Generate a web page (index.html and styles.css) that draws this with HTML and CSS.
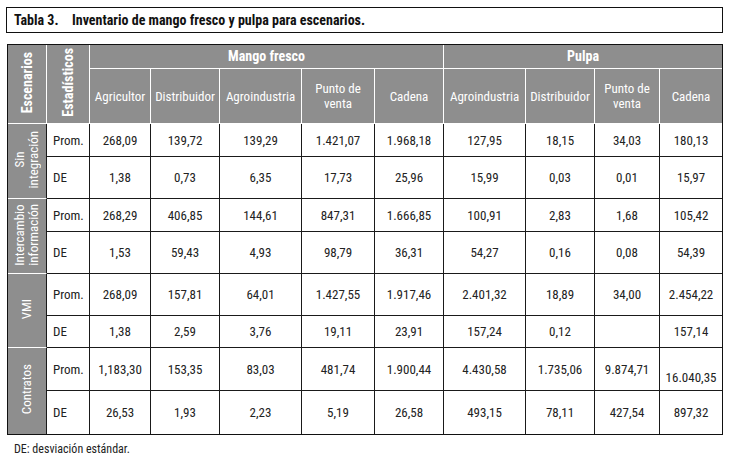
FILE: index.html
```html
<!DOCTYPE html>
<html lang="es">
<head>
<meta charset="utf-8">
<title>Tabla 3</title>
<link rel="stylesheet" href="styles.css">
</head>
<body>
<div class="page">
  <div class="caption"><span class="num">Tabla 3.</span><span class="ctext">Inventario de mango fresco y pulpa para escenarios.</span></div>
  <table class="data">
    <colgroup>
      <col class="c-esc"><col class="c-est"><col class="c-agr"><col class="c-dis"><col class="c-ain"><col class="c-pv"><col class="c-cad">
      <col class="c-ain"><col class="c-dis2"><col class="c-pv2"><col class="c-cad2">
    </colgroup>
    <thead>
      <tr class="h1">
        <th rowspan="2" class="vert"><span class="vt bold">Escenarios</span></th>
        <th rowspan="2" class="vert"><span class="vt bold">Estadísticos</span></th>
        <th colspan="5" class="group">Mango fresco</th>
        <th colspan="4" class="group last">Pulpa</th>
      </tr>
      <tr class="h2">
        <th>Agricultor</th><th>Distribuidor</th><th>Agroindustria</th><th>Punto de<br>venta</th><th>Cadena</th>
        <th>Agroindustria</th><th>Distribuidor</th><th>Punto de<br>venta</th><th class="last">Cadena</th>
      </tr>
    </thead>
    <tbody>
      <tr class="r33">
        <th rowspan="2" class="scen"><span class="vt">Sin<br>integración</span></th>
        <td class="stat">Prom.</td><td>268,09</td><td>139,72</td><td>139,29</td><td>1.421,07</td><td>1.968,18</td><td>127,95</td><td>18,15</td><td>34,03</td><td class="last">180,13</td>
      </tr>
      <tr class="r42">
        <td class="stat">DE</td><td>1,38</td><td>0,73</td><td>6,35</td><td>17,73</td><td>25,96</td><td>15,99</td><td>0,03</td><td>0,01</td><td class="last">15,97</td>
      </tr>
      <tr class="r33">
        <th rowspan="2" class="scen"><span class="vt">Intercambio<br>información</span></th>
        <td class="stat">Prom.</td><td>268,29</td><td>406,85</td><td>144,61</td><td>847,31</td><td>1.666,85</td><td>100,91</td><td>2,83</td><td>1,68</td><td class="last">105,42</td>
      </tr>
      <tr class="r42">
        <td class="stat">DE</td><td>1,53</td><td>59,43</td><td>4,93</td><td>98,79</td><td>36,31</td><td>54,27</td><td>0,16</td><td>0,08</td><td class="last">54,39</td>
      </tr>
      <tr class="r42">
        <th rowspan="2" class="scen"><span class="vt">VMI</span></th>
        <td class="stat">Prom.</td><td>268,09</td><td>157,81</td><td>64,01</td><td>1.427,55</td><td>1.917,46</td><td>2.401,32</td><td>18,89</td><td>34,00</td><td class="last">2.454,22</td>
      </tr>
      <tr class="r32">
        <td class="stat">DE</td><td>1,38</td><td>2,59</td><td>3,76</td><td>19,11</td><td>23,91</td><td>157,24</td><td>0,12</td><td></td><td class="last">157,14</td>
      </tr>
      <tr class="r43">
        <th rowspan="2" class="scen lastrow"><span class="vt">Contratos</span></th>
        <td class="stat">Prom.</td><td>1,183,30</td><td>153,35</td><td>83,03</td><td>481,74</td><td>1.900,44</td><td>4.430,58</td><td>1.735,06</td><td>9.874,71</td><td class="last low">16.040,35</td>
      </tr>
      <tr class="r43 lastrow">
        <td class="stat">DE</td><td>26,53</td><td>1,93</td><td>2,23</td><td>5,19</td><td>26,58</td><td>493,15</td><td>78,11</td><td>427,54</td><td class="last">897,32</td>
      </tr>
    </tbody>
  </table>
  <p class="note">DE: desviación estándar.</p>
</div>
</body>
</html>
```

FILE: styles.css
```css
html, body {
  margin: 0;
  padding: 0;
  background: #ffffff;
}
body {
  font-family: "Roboto Condensed", "Open Sans", "Liberation Sans", sans-serif;
  font-stretch: 75%;
  color: #1c1c1c;
}
.page {
  padding: 7px 0 0 6px;
  width: 717px;
}
.caption {
  box-sizing: border-box;
  height: 26px;
  border: 1px solid #111;
  display: flex;
  align-items: center;
  padding-left: 7px;
  font-weight: bold;
  font-size: 14px;
  color: #111;
}
.caption .num {
  width: 58px;
}
.data {
  margin: 11px 0 0 1px;
  width: 716px;
  table-layout: fixed;
  border-collapse: separate;
  border-spacing: 0;
  border: 1px solid #111;
  font-size: 13px;
}
.c-esc { width: 39px; }
.c-est { width: 43px; }
.c-agr { width: 61px; }
.c-dis { width: 69px; }
.c-ain { width: 82px; }
.c-pv { width: 73px; }
.c-cad { width: 69px; }
.c-dis2 { width: 69px; }
.c-pv2 { width: 65px; }
.c-cad2 { width: 62px; }

th, td {
  padding: 0;
  box-sizing: border-box;
  line-height: 15px;
}
thead th {
  background: #8e8e8e;
  color: #ffffff;
  font-weight: normal;
  border-right: 1px solid #ffffff;
  border-bottom: 1px solid #ffffff;
  text-align: center;
}
thead th.last { border-right: none; }
.h1 { height: 24px; }
.h2 { height: 55px; }
thead .group {
  font-weight: bold;
  font-size: 14px;
}
.vert { vertical-align: middle; }
.vt {
  display: inline-block;
  writing-mode: vertical-rl;
  transform: rotate(180deg);
  line-height: 14px;
  text-align: center;
}
.bold { font-weight: bold; font-size: 14px; }

tbody td {
  background: #ffffff;
  border-right: 1px solid #1a1a1a;
  border-bottom: 1px solid #1a1a1a;
  text-align: center;
  vertical-align: middle;
  color: #222;
}
tbody td.last { border-right: none; }
tbody tr.lastrow td { border-bottom: none; }
tbody td.stat {
  text-align: left;
  padding-left: 6px;
}
tbody td.low {
  vertical-align: bottom;
  padding-bottom: 5px;
}
.scen {
  background: #8e8e8e;
  color: #ffffff;
  font-weight: normal;
  border-right: 1px solid #1a1a1a;
  border-bottom: 1px solid #ffffff;
  text-align: center;
  vertical-align: middle;
}
.scen.lastrow { border-bottom: none; }
.r33 { height: 33px; }
.r42 { height: 42px; }
.r32 { height: 32px; }
.r43 { height: 43px; }

.note {
  margin: 7px 0 0 8px;
  font-size: 12px;
  line-height: 14px;
  color: #222;
}
```
